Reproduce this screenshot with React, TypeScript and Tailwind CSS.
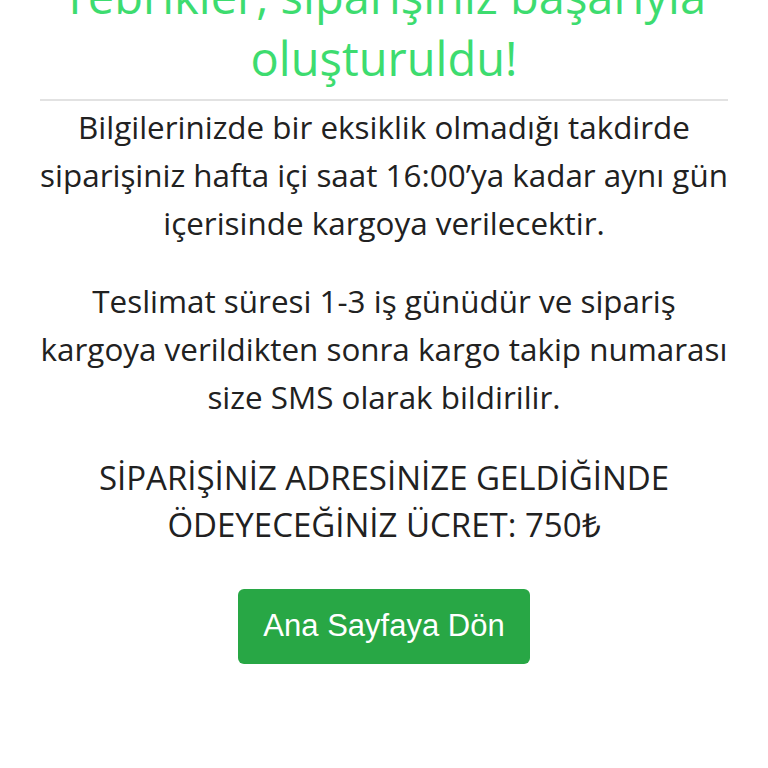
export default function App() {
  return (
    <div className="min-h-screen w-full bg-white px-10 text-center font-['Open_Sans',sans-serif] text-[#212121] overflow-hidden">
      {/* Heading (page is scrolled, first line partly hidden) */}
      <h1 className="mt-[-35px] text-[47px] leading-[62px] font-normal text-[#3ddc6f]">
        Tebrikler, siparişiniz başarıyla
        <br />
        oluşturuldu!
      </h1>
      <hr className="mt-[10px] border-t-2 border-[#e2e2e2]" />

      <p className="mt-[2px] text-[31.4px] leading-[48px]">
        Bilgilerinizde bir eksiklik olmadığı takdirde
        <br />
        siparişiniz hafta içi saat 16:00’ya kadar aynı gün
        <br />
        içerisinde kargoya verilecektir.
      </p>

      <p className="mt-[30px] text-[31.4px] leading-[48px]">
        Teslimat süresi 1-3 iş günüdür ve sipariş
        <br />
        kargoya verildikten sonra kargo takip numarası
        <br />
        size SMS olarak bildirilir.
      </p>

      <p className="mt-[33px] text-[33px] leading-[47px]">
        SİPARİŞİNİZ ADRESİNİZE GELDİĞİNDE
        <br />
        ÖDEYECEĞİNİZ ÜCRET: 750₺
      </p>

      <div className="mt-[41px] flex justify-center">
        <button className="h-[75px] w-[292px] rounded-md bg-[#28a745] font-['Liberation_Sans',sans-serif] text-[31px] text-white">
          Ana Sayfaya Dön
        </button>
      </div>
    </div>
  );
}
